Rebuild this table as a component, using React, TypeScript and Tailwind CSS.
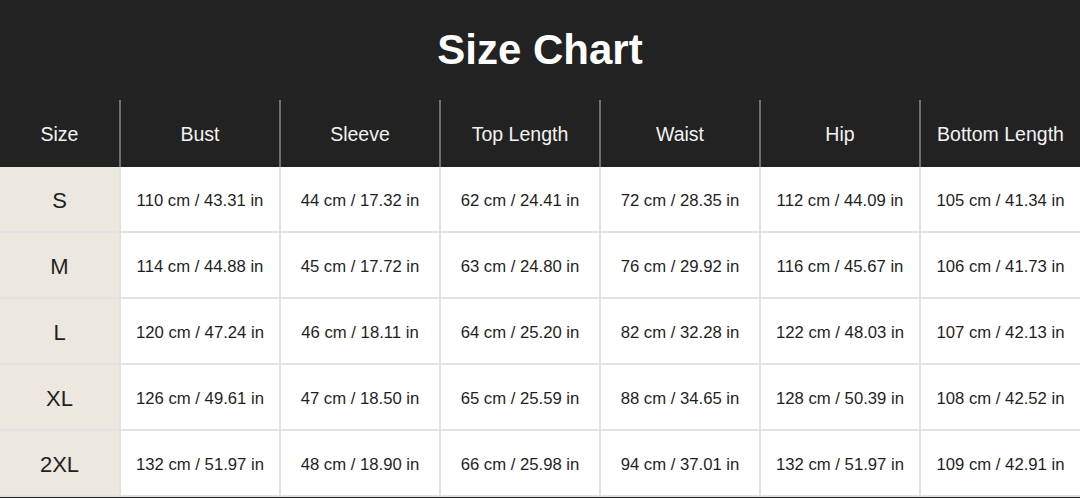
const columns = ['Size', 'Bust', 'Sleeve', 'Top Length', 'Waist', 'Hip', 'Bottom Length'];

const rows: string[][] = [
  ['S', '110 cm / 43.31 in', '44 cm / 17.32 in', '62 cm / 24.41 in', '72 cm / 28.35 in', '112 cm / 44.09 in', '105 cm / 41.34 in'],
  ['M', '114 cm / 44.88 in', '45 cm / 17.72 in', '63 cm / 24.80 in', '76 cm / 29.92 in', '116 cm / 45.67 in', '106 cm / 41.73 in'],
  ['L', '120 cm / 47.24 in', '46 cm / 18.11 in', '64 cm / 25.20 in', '82 cm / 32.28 in', '122 cm / 48.03 in', '107 cm / 42.13 in'],
  ['XL', '126 cm / 49.61 in', '47 cm / 18.50 in', '65 cm / 25.59 in', '88 cm / 34.65 in', '128 cm / 50.39 in', '108 cm / 42.52 in'],
  ['2XL', '132 cm / 51.97 in', '48 cm / 18.90 in', '66 cm / 25.98 in', '94 cm / 37.01 in', '132 cm / 51.97 in', '109 cm / 42.91 in'],
];

const App = () => {
  return (
    <div
      className="w-[1080px] h-[498px] bg-[#222222] overflow-hidden"
      style={{ fontFamily: '"Liberation Sans", Arial, sans-serif' }}
    >
      {/* Title */}
      <div className="h-[100px] flex items-center justify-center">
        <h1 className="text-[42px] font-bold text-white leading-none">Size Chart</h1>
      </div>

      {/* Header row */}
      <div className="grid grid-cols-[121px_repeat(5,160px)_159px] h-[67px]">
        {columns.map((col, i) => (
          <div
            key={col}
            className={`flex items-center justify-center pt-[2px] text-[19.5px] text-[#f2f2f2] ${
              i < columns.length - 1 ? 'border-r-2 border-[#6f6f6f]' : ''
            }`}
          >
            {col}
          </div>
        ))}
      </div>

      {/* Body */}
      <div className="bg-white">
        {rows.map((row) => (
          <div key={row[0]} className="grid grid-cols-[121px_repeat(5,160px)_159px] h-[66px]">
            {row.map((cell, i) => (
              <div
                key={i}
                className={`flex items-center justify-center pt-[3px] border-b-2 border-[#e2e2e2] text-[#1f1f1f] ${
                  i === 0 ? 'bg-[#ece8df] text-[22px]' : 'text-[16.7px]'
                } ${i < row.length - 1 ? 'border-r-2' : ''}`}
              >
                {cell}
              </div>
            ))}
          </div>
        ))}
      </div>
    </div>
  );
};

export default App;
